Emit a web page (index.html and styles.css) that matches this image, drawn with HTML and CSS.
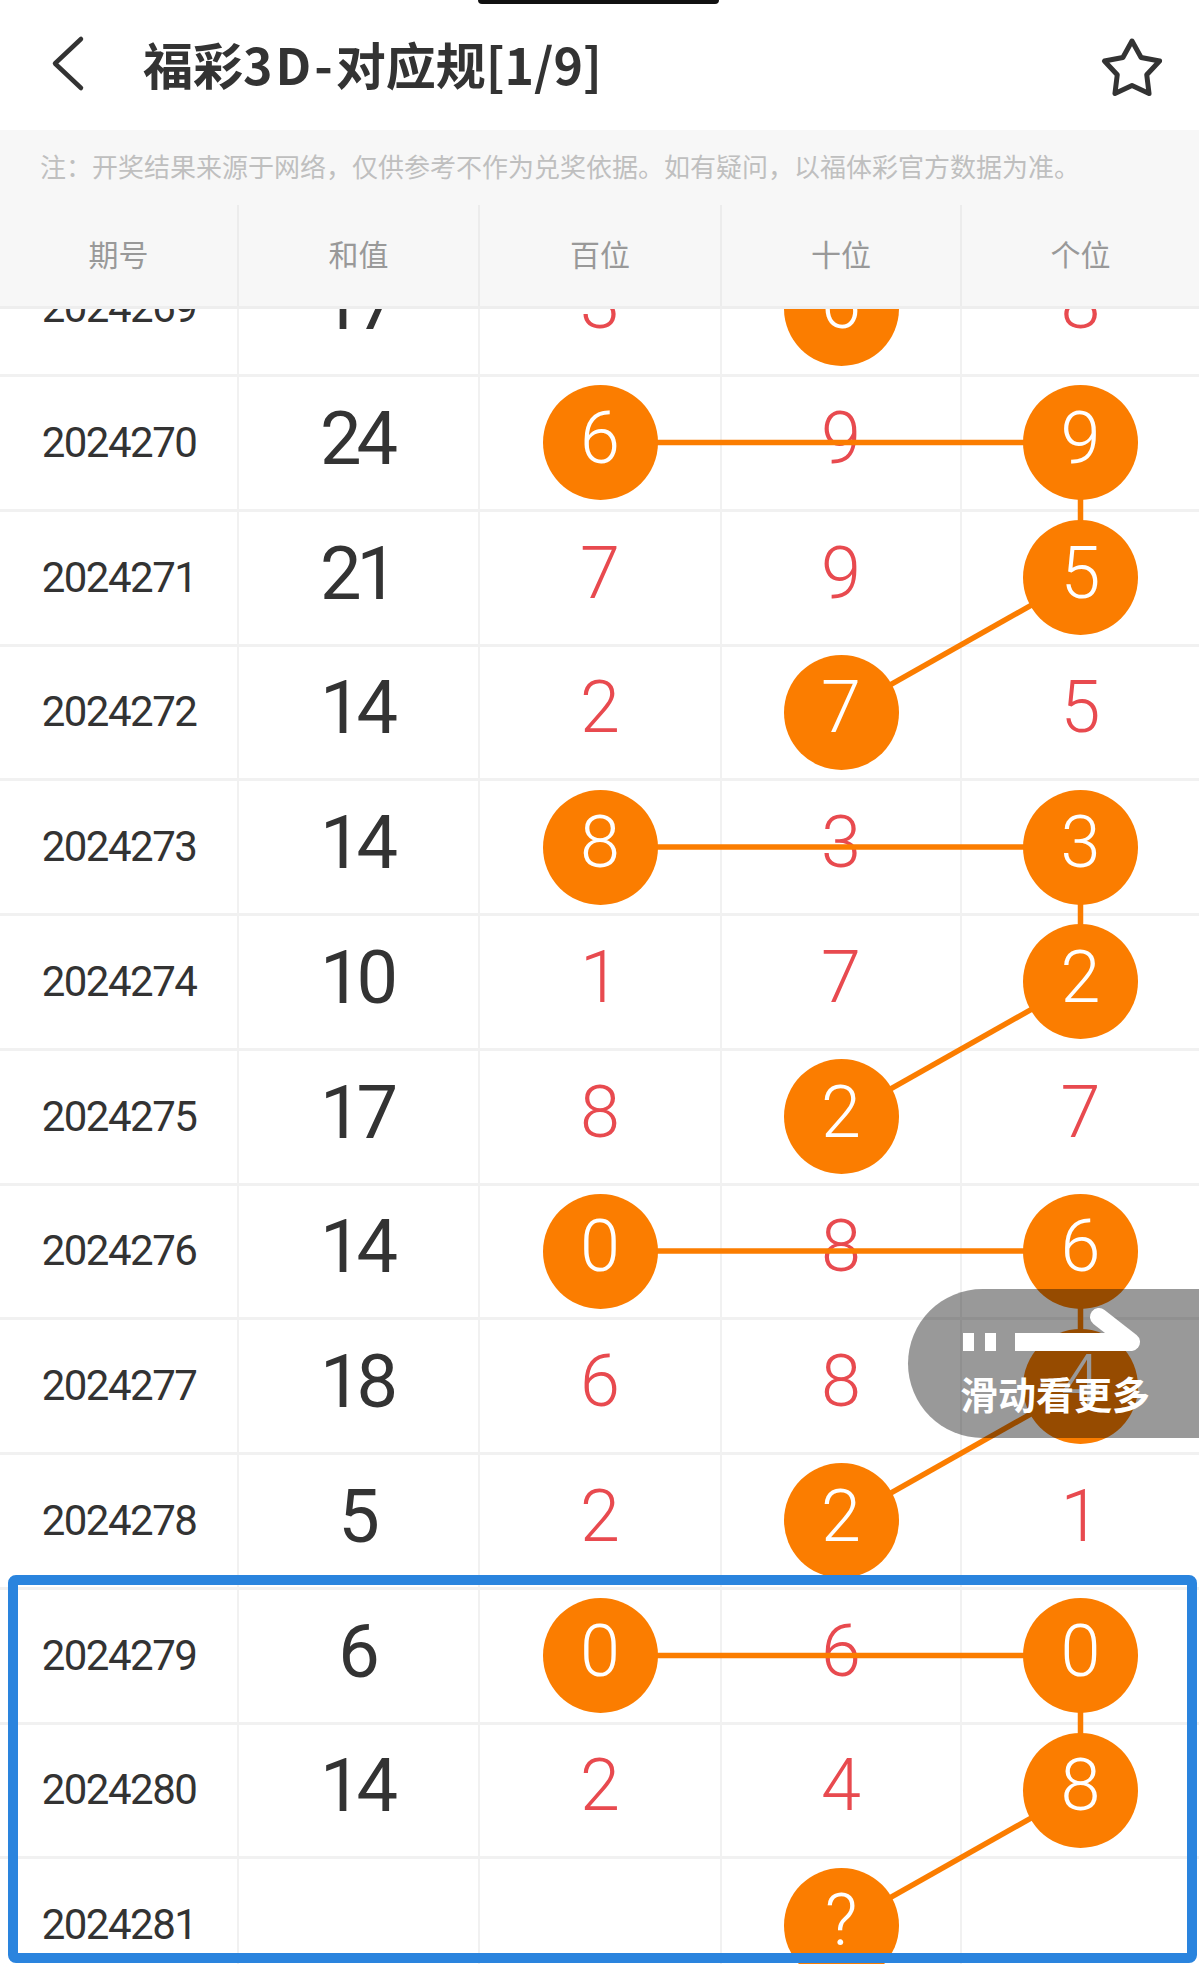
FILE: index.html
```html
<!DOCTYPE html>
<html lang="zh-CN">
<head>
<meta charset="utf-8">
<title>福彩3D-对应规[1/9]</title>
<link rel="stylesheet" href="styles.css">
</head>
<body>
<div class="page">
  <div class="notch"></div>
  <header class="appbar">
    <svg class="back" viewBox="0 0 40 60" width="40" height="60"><polyline points="31,4 5,28.5 31,53"/></svg>
    <h1 class="title">福彩<span class="lat">3D-</span>对应规[1/9]</h1>
    <svg class="star" viewBox="0 0 66 66" width="66" height="66"><polygon points="33,9 42.11,25.46 60.58,29.04 47.74,42.79 50.05,61.46 33,53.5 15.95,61.46 18.26,42.79 5.42,29.04 23.89,25.46"/></svg>
  </header>
  <p class="notice">注：开奖结果来源于网络，仅供参考不作为兑奖依据。如有疑问，以福体彩官方数据为准。</p>
  <div class="thead">
    <div class="th">期号</div>
    <div class="th">和值</div>
    <div class="th">百位</div>
    <div class="th">十位</div>
    <div class="th">个位</div>
  </div>
  <div class="tbody">
    <div class="list">
      <svg class="lines" viewBox="0 0 1199 1752" width="1199" height="1752">
        <line x1="1080.5" y1="-68.9" x2="842" y2="65.9"/>
        <line x1="600" y1="200.6" x2="1080.5" y2="200.6"/>
        <line x1="1080.5" y1="200.6" x2="1080.5" y2="335.4"/>
        <line x1="1080.5" y1="335.4" x2="842" y2="470.1"/>
        <line x1="600" y1="604.9" x2="1080.5" y2="604.9"/>
        <line x1="1080.5" y1="604.9" x2="1080.5" y2="739.6"/>
        <line x1="1080.5" y1="739.6" x2="842" y2="874.4"/>
        <line x1="600" y1="1009.1" x2="1080.5" y2="1009.1"/>
        <line x1="1080.5" y1="1009.1" x2="1080.5" y2="1143.9"/>
        <line x1="1080.5" y1="1143.9" x2="842" y2="1278.6"/>
        <line x1="600" y1="1413.4" x2="1080.5" y2="1413.4"/>
        <line x1="1080.5" y1="1413.4" x2="1080.5" y2="1548.1"/>
        <line x1="1080.5" y1="1548.1" x2="842" y2="1682.9"/>
      </svg>
      <div class="row"><div class="c period">2024269</div><div class="c sum">17</div><div class="c num">3</div><div class="c num"><span class="ball">6</span></div><div class="c num">8</div></div>
      <div class="row"><div class="c period">2024270</div><div class="c sum">24</div><div class="c num"><span class="ball">6</span></div><div class="c num">9</div><div class="c num"><span class="ball">9</span></div></div>
      <div class="row"><div class="c period">2024271</div><div class="c sum">21</div><div class="c num">7</div><div class="c num">9</div><div class="c num"><span class="ball">5</span></div></div>
      <div class="row"><div class="c period">2024272</div><div class="c sum">14</div><div class="c num">2</div><div class="c num"><span class="ball">7</span></div><div class="c num">5</div></div>
      <div class="row"><div class="c period">2024273</div><div class="c sum">14</div><div class="c num"><span class="ball">8</span></div><div class="c num">3</div><div class="c num"><span class="ball">3</span></div></div>
      <div class="row"><div class="c period">2024274</div><div class="c sum">10</div><div class="c num">1</div><div class="c num">7</div><div class="c num"><span class="ball">2</span></div></div>
      <div class="row"><div class="c period">2024275</div><div class="c sum">17</div><div class="c num">8</div><div class="c num"><span class="ball">2</span></div><div class="c num">7</div></div>
      <div class="row"><div class="c period">2024276</div><div class="c sum">14</div><div class="c num"><span class="ball">0</span></div><div class="c num">8</div><div class="c num"><span class="ball">6</span></div></div>
      <div class="row"><div class="c period">2024277</div><div class="c sum">18</div><div class="c num">6</div><div class="c num">8</div><div class="c num"><span class="ball">4</span></div></div>
      <div class="row"><div class="c period">2024278</div><div class="c sum">5</div><div class="c num">2</div><div class="c num"><span class="ball">2</span></div><div class="c num">1</div></div>
      <div class="row"><div class="c period">2024279</div><div class="c sum">6</div><div class="c num"><span class="ball">0</span></div><div class="c num">6</div><div class="c num"><span class="ball">0</span></div></div>
      <div class="row"><div class="c period">2024280</div><div class="c sum">14</div><div class="c num">2</div><div class="c num">4</div><div class="c num"><span class="ball">8</span></div></div>
      <div class="row"><div class="c period">2024281</div><div class="c sum"></div><div class="c num"></div><div class="c num"><span class="ball">?</span></div><div class="c num"></div></div>
    </div>
  </div>
  <div class="hl-box"></div>
  <div class="swipe">
    <svg class="swipe-arrow" viewBox="0 0 190 52" width="190" height="52">
      <rect x="3" y="27" width="11" height="18"/>
      <rect x="25" y="27" width="11" height="18"/>
      <rect x="55" y="27" width="116" height="18"/>
      <line x1="139" y1="11" x2="171" y2="36"/>
    </svg>
    <div class="swipe-text">滑动看更多</div>
  </div>
</div>
</body>
</html>
```
FILE: styles.css
```css
* { box-sizing: border-box; }
html, body { margin: 0; padding: 0; background: #fff; }
.page {
  position: relative;
  width: 1199px;
  height: 1964px;
  overflow: hidden;
  background: #fff;
  font-family: "Noto Sans CJK SC", "Noto Sans", sans-serif;
}
.notch {
  position: absolute;
  left: 478px;
  top: 0;
  width: 241px;
  height: 4px;
  background: #111;
  border-radius: 0 0 4px 4px;
  z-index: 20;
}
.appbar {
  height: 130px;
  display: flex;
  align-items: center;
  padding-left: 50px;
  background: #fff;
}
.back { flex: none; margin-top: -1px; }
.back polyline {
  fill: none;
  stroke: #333;
  stroke-width: 4.5;
  stroke-linecap: round;
  stroke-linejoin: round;
}
.title {
  margin: -4px 0 0 53px;
  font-size: 50px;
  font-weight: 700;
  color: #333;
  line-height: 1;
  letter-spacing: 0;
}
.title .lat { letter-spacing: 3px; }
.star { flex: none; margin-left: auto; margin-right: 34px; margin-top: 0; }
.star polygon {
  fill: none;
  stroke: #333;
  stroke-width: 5;
  stroke-linejoin: round;
}
.notice {
  margin: 0;
  height: 75px;
  line-height: 71px;
  padding-left: 40px;
  font-size: 26px;
  color: #bfbfbf;
  background: #f7f7f7;
  white-space: nowrap;
}
.thead {
  display: grid;
  grid-template-columns: 239px 241px 242px 240px 1fr;
  height: 104px;
  background: #f7f7f7;
  border-bottom: 3px solid #eeeeee;
}
.th {
  display: flex;
  align-items: center;
  justify-content: center;
  font-size: 30px;
  color: #999;
  border-right: 2px solid #ececec;
  padding-bottom: 6px;
}
.th:last-child { border-right: none; }
.tbody {
  height: 1655px;
  overflow: hidden;
}
.list {
  position: relative;
  margin-top: -66.75px;
}
.lines {
  position: absolute;
  left: 0;
  top: 0;
  z-index: 1;
  overflow: visible;
}
.lines line {
  stroke: #fb7d00;
  stroke-width: 5.5;
}
.row {
  display: grid;
  grid-template-columns: 239px 241px 242px 240px 1fr;
  height: 134.75px;
  border-bottom: 3px solid #f1f1f1;
}
.c {
  display: flex;
  align-items: center;
  justify-content: center;
  border-right: 2px solid #f1f1f1;
  font-family: "Roboto", "Liberation Sans", sans-serif;
  line-height: 1;
}
.c:last-child { border-right: none; }
.period {
  font-size: 42px;
  color: #333;
  letter-spacing: -1.5px;
  padding-left: 1px;
}
.sum {
  font-size: 74px;
  font-weight: 400;
  color: #333;
  letter-spacing: -5px;
  padding-right: 4px;
  padding-bottom: 8px;
}
.num {
  font-size: 72px;
  font-weight: 300;
  color: #e84a4f;
  padding-bottom: 8px;
}
.num .ball { margin-top: 8px; }
.ball {
  position: relative;
  z-index: 2;
  width: 115px;
  height: 115px;
  border-radius: 50%;
  background: #fb7d00;
  color: #fff;
  display: flex;
  align-items: center;
  justify-content: center;
  padding-bottom: 8px;
}
.hl-box {
  position: absolute;
  left: 8px;
  top: 1575px;
  width: 1189px;
  height: 388px;
  border: 10px solid #2a84de;
  border-radius: 8px;
  z-index: 9;
}
.swipe {
  position: absolute;
  left: 908px;
  top: 1289px;
  width: 291px;
  height: 149px;
  border-radius: 74.5px 0 0 74.5px;
  background: rgba(0, 0, 0, 0.4);
  z-index: 10;
  padding: 17px 0 0 52px;
  display: flex;
  flex-direction: column;
  align-items: flex-start;
}
.swipe-arrow { display: block; }
.swipe-arrow rect { fill: #fff; }
.swipe-arrow line {
  stroke: #fff;
  stroke-width: 18;
  stroke-linecap: round;
}
.swipe-text {
  margin-top: 16px;
  font-size: 38px;
  font-weight: 700;
  color: #fff;
  line-height: 1;
  white-space: nowrap;
}
```
